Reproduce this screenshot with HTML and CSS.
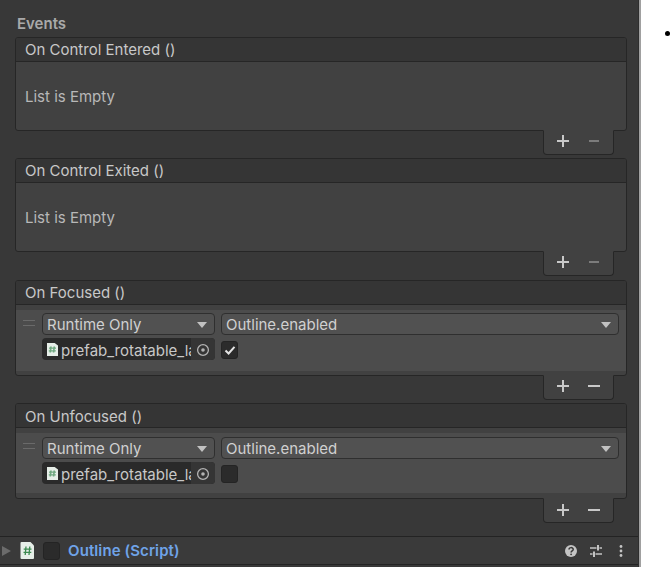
FILE: index.html
```html
<!DOCTYPE html>
<html lang="en">
<head>
<meta charset="utf-8">
<title>Events</title>
<link rel="stylesheet" href="styles.css">
</head>
<body>
<div class="page">
  <main class="panel">
    <h2 class="section-title">Events</h2>

    <section class="event event-empty">
      <div class="event-box">
        <div class="event-head">On Control Entered ()</div>
        <div class="event-body-empty">List is Empty</div>
      </div>
      <div class="event-foot">
        <div class="tab">
          <svg class="pm" viewBox="0 0 12 12"><path d="M6 0v12M0 6h12"/></svg>
          <svg class="pm pm-off" viewBox="0 0 12 12"><path d="M1 6h10"/></svg>
        </div>
      </div>
    </section>

    <section class="event event-empty">
      <div class="event-box">
        <div class="event-head">On Control Exited ()</div>
        <div class="event-body-empty">List is Empty</div>
      </div>
      <div class="event-foot">
        <div class="tab">
          <svg class="pm" viewBox="0 0 12 12"><path d="M6 0v12M0 6h12"/></svg>
          <svg class="pm pm-off" viewBox="0 0 12 12"><path d="M1 6h10"/></svg>
        </div>
      </div>
    </section>

    <section class="event event-focused">
      <div class="event-box">
        <div class="event-head">On Focused ()</div>
        <div class="event-body">
          <div class="band">
            <div class="handle"><i></i><i></i></div>
            <div class="fields">
              <div class="dropdown"><span>Runtime Only</span><b class="caret"></b></div>
              <div class="dropdown"><span>Outline.enabled</span><b class="caret"></b></div>
              <div class="objfield">
                <svg class="doc doc-small" viewBox="1 0 10 15" preserveAspectRatio="none"><path class="doc-page" d="M1 0h7l3 3v12H1z"/><path class="doc-hash" d="M4.600 4 4 11M7.600 4 7 11M2.800 6h6.400M2.600 9h6.400"/></svg>
                <span class="objname">prefab_rotatable_la</span>
                <span class="target"><svg viewBox="0 0 14 14"><circle class="target-ring" cx="7" cy="7" r="5.400"/><circle class="target-dot" cx="7" cy="7" r="1.800"/></svg></span>
              </div>
              <div class="check"><svg viewBox="0 0 12 12"><path d="M1.500 6.500 4.600 9.500 10.500 2.800"/></svg></div>
            </div>
          </div>
        </div>
      </div>
      <div class="event-foot">
        <div class="tab">
          <svg class="pm" viewBox="0 0 12 12"><path d="M6 0v12M0 6h12"/></svg>
          <svg class="pm" viewBox="0 0 12 12"><path d="M0 6h12"/></svg>
        </div>
      </div>
    </section>

    <section class="event event-unfocused">
      <div class="event-box">
        <div class="event-head">On Unfocused ()</div>
        <div class="event-body">
          <div class="band">
            <div class="handle"><i></i><i></i></div>
            <div class="fields">
              <div class="dropdown"><span>Runtime Only</span><b class="caret"></b></div>
              <div class="dropdown"><span>Outline.enabled</span><b class="caret"></b></div>
              <div class="objfield">
                <svg class="doc doc-small" viewBox="1 0 10 15" preserveAspectRatio="none"><path class="doc-page" d="M1 0h7l3 3v12H1z"/><path class="doc-hash" d="M4.600 4 4 11M7.600 4 7 11M2.800 6h6.400M2.600 9h6.400"/></svg>
                <span class="objname">prefab_rotatable_la</span>
                <span class="target"><svg viewBox="0 0 14 14"><circle class="target-ring" cx="7" cy="7" r="5.400"/><circle class="target-dot" cx="7" cy="7" r="1.800"/></svg></span>
              </div>
              <div class="check"></div>
            </div>
          </div>
        </div>
      </div>
      <div class="event-foot">
        <div class="tab">
          <svg class="pm" viewBox="0 0 12 12"><path d="M6 0v12M0 6h12"/></svg>
          <svg class="pm" viewBox="0 0 12 12"><path d="M0 6h12"/></svg>
        </div>
      </div>
    </section>

    <div class="component">
      <svg class="fold" viewBox="0 0 9 10"><path d="M0 0 9 5 0 10z"/></svg>
      <svg class="doc" viewBox="0 0 15 17"><path class="doc-page" d="M1.500 0h9l3.500 3.500V16q0 1-1 1H1.500q-1 0-1-1V1q0-1 1-1z"/><path class="doc-hash" d="M6 4.500 5.200 13M9.800 4.500 9 13M3.700 7.200h7.800M3.500 10.400h7.800"/></svg>
      <div class="check comp-check"></div>
      <span class="comp-name">Outline (Script)</span>
      <div class="comp-tools">
        <svg class="tool" viewBox="0 0 12 12"><circle class="tool-fill" cx="6" cy="6" r="6"/><path class="tool-q" d="M4 4.600c0-2.600 4.200-2.600 4.200-.2 0 1.500-2.100 1.500-2.100 3"/><circle class="tool-dot" cx="6.100" cy="9.300" r=".9"/></svg>
        <svg class="tool" viewBox="0 0 12 12"><path class="tool-line" d="M0 3h6.500M9.500 3H12M0 9h2.500M5.500 9H12"/><path class="tool-knob" d="M8 0v5.500M4 6.500V12"/></svg>
        <svg class="tool tool-dots" viewBox="0 0 4 12"><circle cx="2" cy="1.500" r="1.400"/><circle cx="2" cy="6" r="1.400"/><circle cx="2" cy="10.500" r="1.400"/></svg>
      </div>
    </div>
  </main>
  <div class="edge"></div>
  <aside class="side"><ul class="side-list"><li>&nbsp;</li></ul></aside>
</div>
</body>
</html>
```

FILE: styles.css
```css
* { box-sizing: border-box; }

html, body {
  margin: 0;
  height: 100%;
  overflow: hidden;
  background: #fff;
}

.page {
  display: flex;
  width: 670px;
  height: 567px;
  overflow: hidden;
  font-family: Inter, "Noto Sans", sans-serif;
  font-size: 15px;
  color: #c4c4c4;
}

.panel {
  width: 639px;
  flex: none;
  background: #383838;
  padding-top: 14px;
  border-right: 1px solid #2e2e2e;
}

.edge {
  width: 2px;
  flex: none;
  background: #a0a0a0;
}

.section-title {
  margin: 0 0 5px 17px;
  height: 18px;
  line-height: 19px;
  font-size: 15px;
  font-weight: 600;
  color: #a9a9a9;
}

.event { padding: 0 11px 0 15px; }
.event-empty { margin-bottom: 3px; }
.event-focused { margin-top: 4px; margin-bottom: 3px; }
.event-unfocused { margin-bottom: 13px; }

.event-box {
  border: 1px solid #262626;
  border-radius: 3px;
  background: #414141;
  overflow: hidden;
}

.event-head {
  height: 24px;
  line-height: 24px;
  padding-left: 9px;
  background: #353535;
  border-bottom: 1px solid #262626;
  color: #c8c8c8;
}
.event-unfocused .event-head { line-height: 25px; }

.event-body-empty {
  height: 68px;
  padding-left: 9px;
  line-height: 69px;
  color: #b8b8b8;
}

.event-body { padding: 5px 0 4px; }

.band {
  display: flex;
  height: 61px;
  background: #4c4c4c;
}
.event-unfocused .event-body { padding-bottom: 5px; }
.event-unfocused .band { height: 60px; }

.handle {
  width: 26px;
  flex: none;
  padding: 10px 0 0 7px;
}
.handle i {
  display: block;
  width: 12px;
  height: 1px;
  margin-bottom: 4px;
  background: #6a6a6a;
}

.fields {
  display: grid;
  grid-template-columns: 173px 398px;
  grid-template-rows: 22px 22px;
  column-gap: 6px;
  row-gap: 3px;
  padding-top: 3px;
}
.event-unfocused .fields { padding-top: 4px; }

.dropdown {
  display: flex;
  align-items: center;
  justify-content: space-between;
  padding: 0 5px 0 4px;
  background: #515151;
  border: 1px solid #2f2f2f;
  border-radius: 4px;
  color: #d0d0d0;
}

.caret {
  width: 0;
  height: 0;
  margin: 2px 2px 0 0;
  border-left: 5px solid transparent;
  border-right: 5px solid transparent;
  border-top: 6px solid #c2c2c2;
}

.objfield {
  display: flex;
  align-items: center;
  padding-left: 5px;
  background: #2a2a2a;
  border-radius: 4px;
  overflow: hidden;
  color: #c8c8c8;
}

.objname {
  flex: 1;
  min-width: 0;
  overflow: hidden;
  white-space: nowrap;
  margin-left: 3px;
  padding-top: 2px;
}

.target {
  display: flex;
  align-items: center;
  justify-content: center;
  flex: none;
  width: 24px;
  height: 100%;
  padding-top: 1px;
  background: #353535;
}
.target svg { width: 14px; height: 14px; }
.target-ring { fill: none; stroke: #b4b4b4; stroke-width: 1.300; }
.target-dot { fill: #b4b4b4; }

.doc { flex: none; width: 15px; height: 17px; }
.doc-small { width: 11px; height: 13px; }
.doc-page { fill: #e6eee8; }
.doc-hash { fill: none; stroke: #3c8a50; stroke-width: 1.300; }
.doc-small .doc-hash { stroke: #6fa880; stroke-width: 1.500; }

.check {
  align-self: start;
  display: flex;
  align-items: center;
  justify-content: center;
  width: 17px;
  height: 18px;
  margin-top: 3px;
  background: #2b2b2b;
  border: 1px solid #242424;
  border-radius: 3px;
}
.check svg { width: 12px; height: 12px; }
.check path { fill: none; stroke: #e4e4e4; stroke-width: 2; }

.event-foot {
  display: flex;
  justify-content: flex-end;
  padding-right: 13px;
}

.tab {
  display: flex;
  align-items: center;
  gap: 19px;
  width: 71px;
  height: 25px;
  margin-top: -1px;
  padding: 0 0 3px 13px;
  background: #414141;
  border: 1px solid #262626;
  border-top-color: #414141;
  border-radius: 0 0 4px 4px;
}
.event-unfocused .tab { padding-bottom: 1px; }

.pm { width: 12px; height: 12px; flex: none; }
.pm path { fill: none; stroke: #c8c8c8; stroke-width: 2; }
.pm-off path { stroke: #7c7c7c; }

.component {
  display: flex;
  align-items: center;
  height: 29px;
  padding-left: 2px;
  border-top: 1px solid #232323;
  border-bottom: 1px solid #232323;
  background: #3a3a3a;
}

.fold { width: 9px; height: 10px; flex: none; }
.fold path { fill: #6b6b6b; }
.component .doc { margin-left: 9px; }
.comp-check { align-self: center; margin: 0 0 0 8px; }

.comp-name {
  margin-left: 8px;
  font-weight: 600;
  letter-spacing: .1px;
  color: #6fa3e8;
}

.comp-tools {
  display: flex;
  align-items: center;
  margin-left: auto;
  gap: 13px;
  padding-right: 15px;
}

.tool { width: 12px; height: 12px; flex: none; }
.tool-fill { fill: #c4c4c4; }
.tool-q { fill: none; stroke: #383838; stroke-width: 1.500; }
.tool-dot { fill: #383838; }
.tool-line { fill: none; stroke: #c4c4c4; stroke-width: 1.300; }
.tool-knob { fill: none; stroke: #c4c4c4; stroke-width: 2; }
.tool-dots { width: 4px; margin-left: 4px; }
.tool-dots circle { fill: #c4c4c4; }

.side { flex: none; width: 100px; padding-top: 22px; color: #000; }
.side-list { margin: 0; padding-left: 41px; font-size: 18px; line-height: 20px; font-family: "Liberation Serif", serif; }
```
